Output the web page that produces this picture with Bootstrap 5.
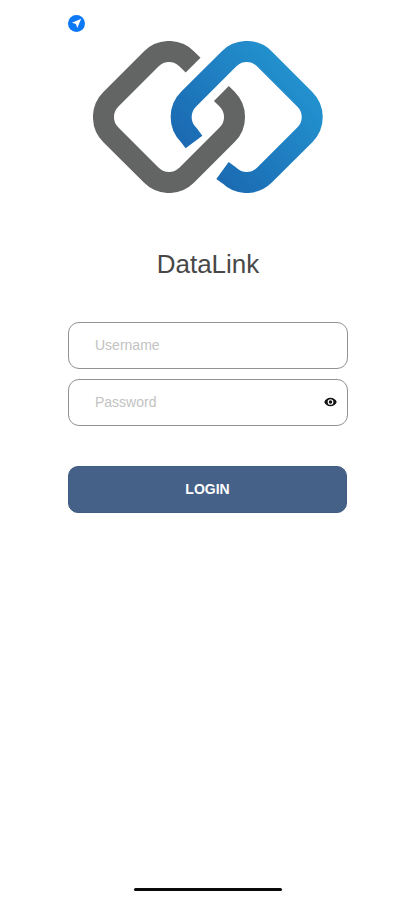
<!DOCTYPE html>
<html lang="en">
<head>
    <meta charset="UTF-8">
    <meta name="viewport" content="width=device-width, initial-scale=1.0">
    <title>DataLink</title>
    <link href="https://cdn.jsdelivr.net/npm/bootstrap@5.3.0/dist/css/bootstrap.min.css" rel="stylesheet">
    <style>
        body { font-family: "Liberation Sans", Arial, sans-serif; background: #fff; }
        .login-page { height: 900px; padding: 15px 67px 9px 68px; overflow: hidden; }
        .locate-icon { display: block; width: 17px; height: 17px; }
        .logo-wrap { margin: 9px 0 0 25px; height: 152px; }
        .logo-svg { display: block; width: 230px; height: 152px; filter: blur(.5px); }
        .app-title { font-size: 26px; line-height: 30px; font-weight: 400; color: #484848; text-align: center; margin: 56px 0 43px; }
        .login-input.form-control { height: 47px; border: 1px solid #929292; border-radius: 11px; padding: 0 40px 2px 26px; font-size: 14px; color: #333; box-shadow: none; }
        .login-input.form-control::placeholder { color: #c2c2c2; opacity: 1; }
        .field-gap { margin-bottom: 10px; }
        .eye-btn { position: absolute; right: 11px; top: 18px; width: 13px; height: 10px; display: block; }
        .login-btn.btn { width: 279px; height: 47px; margin-top: 40px; background: #456187; border: 1px solid #3f5c84; border-radius: 10px; color: #fff; font-size: 14px; font-weight: 700; padding: 0; }
        .home-bar { width: 148px; height: 3px; border-radius: 2px; background: #0a0a0a; margin: auto 0 0 66px; }
    </style>
</head>
<body>
    <div class="login-page d-flex flex-column">
        <!-- location indicator -->
        <svg class="locate-icon" viewBox="0 0 17 17" aria-hidden="true">
            <circle cx="8.5" cy="8.5" r="8.5" fill="#0b78f5"/>
            <path d="M13.2 3.8 3.9 7.7 7.9 9.1 9.3 13.1Z" fill="#fff"/>
        </svg>

        <!-- logo -->
        <div class="logo-wrap">
            <svg class="logo-svg" viewBox="93 41 230 152" aria-label="DataLink logo">
                <defs>
                    <linearGradient id="blueLink" gradientUnits="userSpaceOnUse" x1="300" y1="70" x2="190" y2="170">
                        <stop offset="0" stop-color="#2393d0"/>
                        <stop offset="1" stop-color="#1a66af"/>
                    </linearGradient>
                </defs>
                <path d="M193.1 65.200 L186.700 58.800 A25 25 0 0 0 151.300 58.800 L110.800 99.300 A25 25 0 0 0 110.800 134.700 L151.300 175.200 A25 25 0 0 0 186.700 175.200 L227.200 134.700 A25 25 0 0 0 227.200 99.300 L221.400 93.500" fill="none" stroke="#636464" stroke-width="21"/>
                <path d="M194 142 L188.500 134.700 A25 25 0 0 1 188.500 99.300 L229 58.800 A25 25 0 0 1 264.400 58.800 L304.900 99.300 A25 25 0 0 1 304.900 134.700 L264.400 175.200 A25 25 0 0 1 229 175.200 L222.500 170.500" fill="none" stroke="url(#blueLink)" stroke-width="21"/>
            </svg>
        </div>

        <h1 class="app-title">DataLink</h1>

        <form>
            <div class="field-gap">
                <input type="text" class="form-control login-input" placeholder="Username">
            </div>
            <div class="position-relative">
                <input type="password" class="form-control login-input" placeholder="Password">
                <svg class="eye-btn" viewBox="0 0 24 18" aria-hidden="true">
                    <path d="M12 1C6.500 1 2.200 4.400.500 9c1.700 4.600 6 8 11.500 8s9.800-3.400 11.500-8C21.800 4.400 17.500 1 12 1Zm0 13.300A5.300 5.300 0 1 1 12 3.700a5.300 5.300 0 0 1 0 10.600Zm0-8.500a3.200 3.200 0 1 0 0 6.400 3.200 3.200 0 0 0 0-6.400Z" fill="#111"/>
                </svg>
            </div>
            <button type="button" class="btn login-btn">LOGIN</button>
        </form>

        <div class="home-bar"></div>
    </div>
    <script src="https://cdn.jsdelivr.net/npm/bootstrap@5.3.0/dist/js/bootstrap.bundle.min.js"></script>
</body>
</html>
